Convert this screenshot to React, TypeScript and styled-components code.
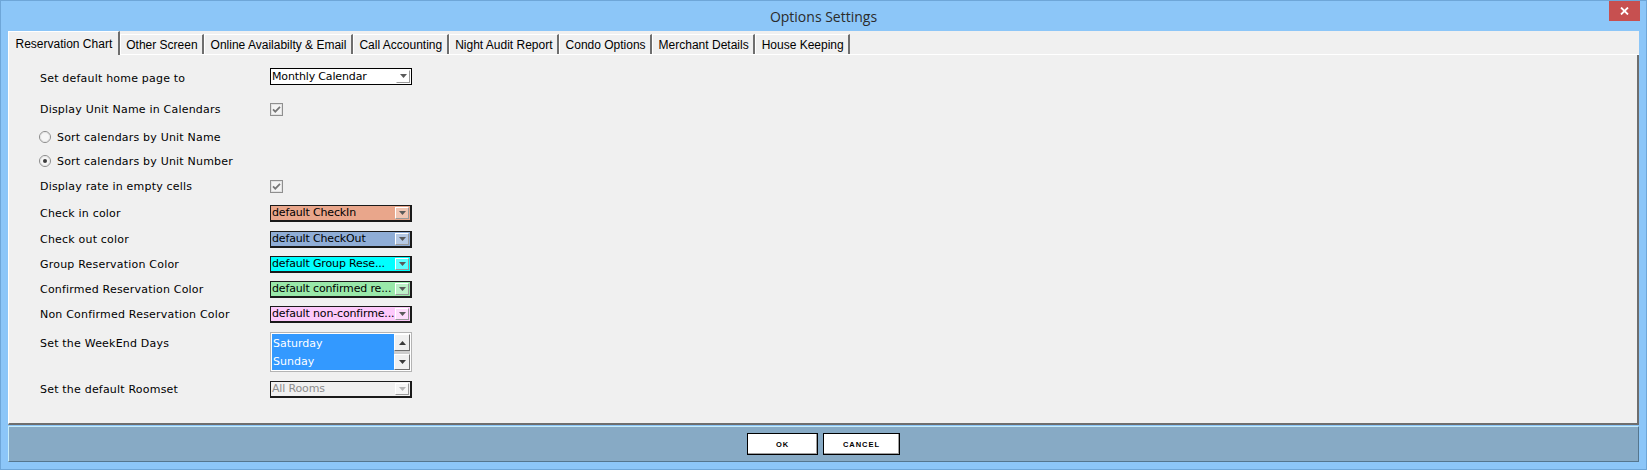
import React from "react";
import styled, { createGlobalStyle } from "styled-components";

const TABS = [
  "Reservation Chart",
  "Other Screen",
  "Online Availabilty & Email",
  "Call Accounting",
  "Night Audit Report",
  "Condo Options",
  "Merchant Details",
  "House Keeping",
];

const COLOR_ROWS = [
  { label: "Check in color", text: "default CheckIn", bg: "#e9a68b", h: 30 },
  { label: "Check out color", text: "default CheckOut", bg: "#8fadd6", h: 22 },
  { label: "Group Reservation Color", text: "default Group Rese...", bg: "#00ffff", h: 28 },
  { label: "Confirmed Reservation Color", text: "default confirmed re...", bg: "#99e8a9", h: 22 },
  { label: "Non Confirmed Reservation Color", text: "default non-confirme...", bg: "#fdc9fb", h: 28 },
];

const CheckBox: React.FC = () => (
  <svg width="13" height="13" viewBox="0 0 13 13">
    <rect x="0.5" y="0.5" width="12" height="12" fill="#f4f4f4" stroke="#8f8f8f" />
    <rect x="1.5" y="1.5" width="10" height="10" fill="none" stroke="#e2e2e2" />
    <path d="M3 6.3 L5.3 8.7 L10 3.8" stroke="#767676" strokeWidth="1.7" fill="none" />
  </svg>
);

const Radio: React.FC<{ checked?: boolean }> = ({ checked }) => (
  <svg width="12" height="12" viewBox="0 0 12 12">
    <circle cx="6" cy="6" r="5.5" fill="#f6f6f6" stroke="#8a8a8a" />
    <circle cx="6" cy="6" r="4.5" fill="none" stroke="#e4e4e4" />
    {checked && <circle cx="6" cy="6" r="2" fill="#3c3c3c" />}
  </svg>
);

const Arrow: React.FC<{ up?: boolean; color?: string }> = ({ up, color = "#555" }) => (
  <svg width="7" height="4" viewBox="0 0 7 4">
    <path d={up ? "M0 4 L3.5 0 L7 4 Z" : "M0 0 L7 0 L3.5 4 Z"} fill={color} />
  </svg>
);

const Dropdown: React.FC<{ text: string; bg?: string; thick?: boolean; disabled?: boolean }> = ({
  text,
  bg = "#ffffff",
  thick,
  disabled,
}) => (
  <Select $bg={bg} $thick={thick} $disabled={disabled}>
    <SelectText>{text}</SelectText>
    <ArrowButton>
      <Arrow color={disabled ? "#b4b4b4" : "#5a5a5a"} />
    </ArrowButton>
  </Select>
);

const App: React.FC = () => {
  return (
    <Window>
      <GlobalStyle />
      <TitleBar>
        <span />
        <Title>Options Settings</Title>
        <CloseButton>
          <svg width="9" height="8" viewBox="0 0 9 8">
            <path d="M1 0.5 L8 7.5 M8 0.5 L1 7.5" stroke="#fff" strokeWidth="1.8" />
          </svg>
        </CloseButton>
      </TitleBar>

      <Body>
        <TabStrip>
          {TABS.map((t, i) => (
            <Tab key={t} $active={i === 0}>
              {t}
            </Tab>
          ))}
        </TabStrip>

        <Panel>
          <Row $h={24}>
            <Label $dy={5}>Set default home page to</Label>
            <Dropdown text="Monthly Calendar" />
          </Row>
          <Row $h={34} $mt={4}>
            <Label>Display Unit Name in Calendars</Label>
            <CheckBox />
          </Row>
          <Row $h={22}>
            <RadioLabel>
              <Radio />
              Sort calendars by Unit Name
            </RadioLabel>
          </Row>
          <Row $h={26}>
            <RadioLabel>
              <Radio checked />
              Sort calendars by Unit Number
            </RadioLabel>
          </Row>
          <Row $h={24}>
            <Label>Display rate in empty cells</Label>
            <CheckBox />
          </Row>
          {COLOR_ROWS.map((r) => (
            <Row key={r.label} $h={r.h}>
              <Label>{r.label}</Label>
              <Dropdown text={r.text} bg={r.bg} thick />
            </Row>
          ))}
          <Row $h={48} $top>
            <Label $dy={9}>Set the WeekEnd Days</Label>
            <ListBox>
              <ListItems>
                <ListItem>Saturday</ListItem>
                <ListItem>Sunday</ListItem>
              </ListItems>
              <ScrollBar>
                <ScrollButton $h={17}>
                  <Arrow up color="#3a3a3a" />
                </ScrollButton>
                <ScrollTrack />
                <ScrollButton $h={16}>
                  <Arrow color="#3a3a3a" />
                </ScrollButton>
              </ScrollBar>
            </ListBox>
          </Row>
          <Row $h={26}>
            <Label>Set the default Roomset</Label>
            <Dropdown text="All Rooms" bg="#f0f0f0" thick disabled />
          </Row>
        </Panel>

        <ButtonBar>
          <DialogButton $w={71}>OK</DialogButton>
          <DialogButton $w={77}>CANCEL</DialogButton>
        </ButtonBar>
      </Body>
    </Window>
  );
};

export default App;

const GlobalStyle = createGlobalStyle`
  html, body {
    margin: 0;
    padding: 0;
    background: #8cc6f8;
  }
  body {
    width: 1647px;
    height: 470px;
    overflow: hidden;
  }
`;

const Window = styled.div`
  box-sizing: border-box;
  width: 1647px;
  height: 470px;
  background: #8cc6f8;
  border: 1px solid #6ea6d8;
  display: flex;
  flex-direction: column;
`;

const TitleBar = styled.div`
  height: 30px;
  display: grid;
  grid-template-columns: 1fr auto 1fr;
  align-items: center;
`;

const Title = styled.div`
  font: 14px "Open Sans", "Noto Sans", sans-serif;
  color: #2b2b2b;
`;

const CloseButton = styled.div`
  justify-self: end;
  align-self: start;
  width: 31px;
  height: 20px;
  margin-right: 6px;
  background: #c75050;
  display: flex;
  align-items: center;
  justify-content: center;
`;

const Body = styled.div`
  margin: 0 7px;
  display: flex;
  flex-direction: column;
`;

const TabStrip = styled.div`
  height: 23px;
  background: #f0f0f0;
  border-bottom: 1px solid #ffffff;
  display: flex;
  align-items: flex-end;
`;

const Tab = styled.div<{ $active?: boolean }>`
  box-sizing: border-box;
  height: ${({ $active }) => ($active ? 24 : 20)}px;
  margin-bottom: ${({ $active }) => ($active ? -1 : 0)}px;
  padding: ${({ $active }) => ($active ? "0 5.5px 0 6.5px" : "0 4.5px 0 5.5px")};
  display: flex;
  align-items: center;
  background: #f0f0f0;
  border-top: 1px solid #ffffff;
  border-left: 1px solid #ffffff;
  border-right: 2px solid #6e6e6e;
  font: 12px "Liberation Sans", Arial, sans-serif;
  color: #000;
  white-space: nowrap;
`;

const Panel = styled.div`
  box-sizing: border-box;
  height: 370px;
  background: #f0f0f0;
  border-left: 1px solid #ffffff;
  border-right: 2px solid #6e6e6e;
  border-bottom: 2px solid #6e6e6e;
  padding: 9px 0 0 31px;
  display: flex;
  flex-direction: column;
`;

const Row = styled.div<{ $h: number; $mt?: number; $top?: boolean }>`
  display: flex;
  align-items: ${({ $top }) => ($top ? "flex-start" : "center")};
  height: ${({ $h }) => $h}px;
  margin-top: ${({ $mt }) => $mt || 0}px;
`;

const Label = styled.div<{ $dy?: number }>`
  width: 230px;
  padding-top: ${({ $dy }) => $dy || 0}px;
  font: 11px/13px "DejaVu Sans", Verdana, sans-serif;
  letter-spacing: 0.2px;
  color: #000;
  white-space: nowrap;
`;

const RadioLabel = styled.div`
  display: flex;
  align-items: center;
  gap: 6px;
  margin-left: -1px;
  font: 11px/13px "DejaVu Sans", Verdana, sans-serif;
  letter-spacing: 0.2px;
  color: #000;
`;

const Select = styled.div<{ $bg: string; $thick?: boolean; $disabled?: boolean }>`
  box-sizing: border-box;
  width: 142px;
  height: 17px;
  display: flex;
  background: ${({ $bg }) => $bg};
  border: ${({ $thick }) => ($thick ? "2px solid #1a1a1a" : "1px solid #000")};
  ${({ $thick }) => ($thick ? "border-top-width: 1px; border-left-width: 1px;" : "")}
  font: 11px "DejaVu Sans", Verdana, sans-serif;
  letter-spacing: -0.15px;
  color: ${({ $disabled }) => ($disabled ? "#8c8c8c" : "#000")};
`;

const SelectText = styled.div`
  flex: 1;
  min-width: 0;
  display: flex;
  align-items: center;
  padding-left: 1px;
  white-space: nowrap;
`;

const ArrowButton = styled.div`
  box-sizing: border-box;
  flex: none;
  width: 14px;
  margin: 1px;
  border: 1px solid;
  border-color: #ffffff #9a9a9a #9a9a9a #ffffff;
  background: rgba(255, 255, 255, 0.35);
  display: flex;
  align-items: center;
  justify-content: center;
`;

const ListBox = styled.div`
  box-sizing: border-box;
  width: 142px;
  height: 40px;
  margin-top: 4px;
  padding: 1px;
  border: 1px solid #b4b4b4;
  background: #ffffff;
  display: flex;
`;

const ListItems = styled.div`
  flex: 1;
  background: #3399ff;
`;

const ListItem = styled.div`
  height: 18px;
  display: flex;
  align-items: center;
  padding-left: 1px;
  font: 11px "DejaVu Sans", Verdana, sans-serif;
  color: #ffffff;
`;

const ScrollBar = styled.div`
  width: 16px;
  display: flex;
  flex-direction: column;
  background: #cdcdcd;
`;

const ScrollButton = styled.div<{ $h: number }>`
  box-sizing: border-box;
  height: ${({ $h }) => $h}px;
  background: #f0f0f0;
  border: 1px solid;
  border-color: #ffffff #6e6e6e #6e6e6e #ffffff;
  display: flex;
  align-items: center;
  justify-content: center;
`;

const ScrollTrack = styled.div`
  flex: 1;
`;

const ButtonBar = styled.div`
  box-sizing: border-box;
  height: 36px;
  margin-top: 1px;
  background: #87aac5;
  border: 1px solid;
  border-color: #c6ecfa #55768e #55768e #c6ecfa;
  display: flex;
  align-items: center;
  justify-content: center;
  gap: 5px;
`;

const DialogButton = styled.button<{ $w: number }>`
  box-sizing: border-box;
  width: ${({ $w }) => $w}px;
  height: 22px;
  padding: 0;
  background: #ffffff;
  border: 1px solid #000;
  box-shadow: inset -1px -1px #a0a0a0;
  font: bold 7.5px "Liberation Sans", Arial, sans-serif;
  letter-spacing: 1px;
  color: #000;
`;
